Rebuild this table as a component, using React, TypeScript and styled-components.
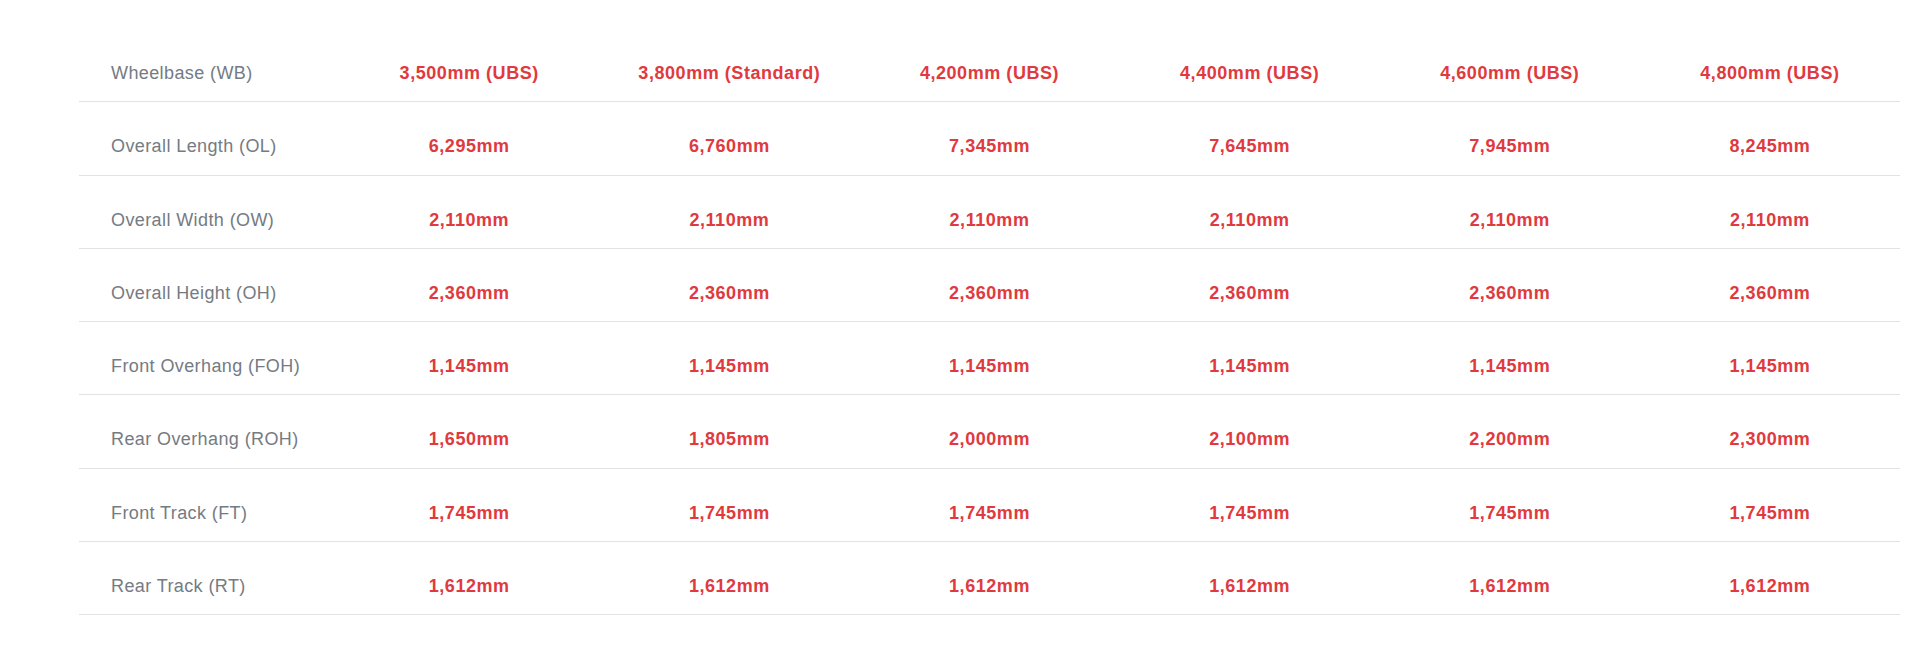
import styled, { createGlobalStyle } from "styled-components";

const GlobalStyle = createGlobalStyle`
  * {
    box-sizing: border-box;
  }
  body {
    margin: 0;
    background: #ffffff;
    font-family: "Liberation Sans", Arial, sans-serif;
  }
`;

const Wrapper = styled.section`
  padding: 29px 20px 32px 79px;
`;
const Table = styled.table`
  width: 100%;
  border-collapse: collapse;
  table-layout: fixed;
`;
const Row = styled.tr`
  border-bottom: 1px solid #e3e3e3;
`;
const Label = styled.th`
  padding: 31px 10px 15.3px 32px;
  text-align: left;
  font-size: 18px;
  line-height: 26px;
  font-weight: 400;
  letter-spacing: 0.4px;
  color: #757b83;
  white-space: nowrap;
`;
const Value = styled.td`
  padding: 31px 4px 15.3px;
  text-align: center;
  font-size: 18px;
  line-height: 26px;
  font-weight: 700;
  letter-spacing: 0.55px;
  color: #e03a3e;
  white-space: nowrap;
`;

interface ISpec {
  label: string;
  values: string[];
}

const specs: ISpec[] = [
  {
    label: "Wheelbase (WB)",
    values: [
      "3,500mm (UBS)",
      "3,800mm (Standard)",
      "4,200mm (UBS)",
      "4,400mm (UBS)",
      "4,600mm (UBS)",
      "4,800mm (UBS)",
    ],
  },
  {
    label: "Overall Length (OL)",
    values: ["6,295mm", "6,760mm", "7,345mm", "7,645mm", "7,945mm", "8,245mm"],
  },
  {
    label: "Overall Width (OW)",
    values: Array(6).fill("2,110mm"),
  },
  {
    label: "Overall Height (OH)",
    values: Array(6).fill("2,360mm"),
  },
  {
    label: "Front Overhang (FOH)",
    values: Array(6).fill("1,145mm"),
  },
  {
    label: "Rear Overhang (ROH)",
    values: ["1,650mm", "1,805mm", "2,000mm", "2,100mm", "2,200mm", "2,300mm"],
  },
  {
    label: "Front Track (FT)",
    values: Array(6).fill("1,745mm"),
  },
  {
    label: "Rear Track (RT)",
    values: Array(6).fill("1,612mm"),
  },
];

function App() {
  return (
    <>
      <GlobalStyle />
      <Wrapper>
        <Table>
          <tbody>
            {specs.map((spec) => (
              <Row key={spec.label}>
                <Label scope="row">{spec.label}</Label>
                {spec.values.map((value, i) => (
                  <Value key={i}>{value}</Value>
                ))}
              </Row>
            ))}
          </tbody>
        </Table>
      </Wrapper>
    </>
  );
}

export default App;
